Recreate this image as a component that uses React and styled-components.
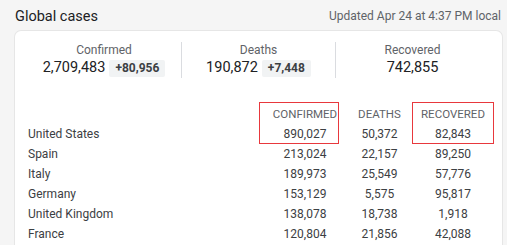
import React from "react";
import styled, { createGlobalStyle } from "styled-components";

const Global = createGlobalStyle`
  html, body { margin: 0; padding: 0; background: #f5f5f5; }
  body { font-family: Roboto, "Liberation Sans", Arial, sans-serif; color: #202124; }
`;

const Page = styled.div`
  width: 507px;
  height: 245px;
  overflow: hidden;
  box-sizing: border-box;
  padding: 5px 5px 0 15px;
`;

const Header = styled.div`
  display: flex;
  align-items: center;
  justify-content: space-between;
  height: 22px;
  margin-bottom: 4px;
`;

const Title = styled.h2`
  margin: 0;
  font-size: 14.5px;
  font-weight: 400;
  color: #202124;
`;

const Updated = styled.span`
  font-size: 12px;
  color: #5f6368;
  margin-right: 1px;
`;

const Card = styled.div`
  background: #fff;
  border-radius: 6px;
  box-shadow: 0 0 0 1px #e6e6e6, 0 1px 2px rgba(0,0,0,0.06);
  height: 240px;
`;

const Stats = styled.div`
  display: grid;
  grid-template-columns: repeat(3, 1fr);
  padding: 11px 13px 0 12px;
`;

const Stat = styled.div`
  display: flex;
  flex-direction: column;
  align-items: center;
  border-left: ${p => (p.$first ? "none" : "1px solid #dadce0")};
  height: 36px;
  justify-content: space-between;
`;

const StatLabel = styled.div`
  font-size: 12px;
  color: #5f6368;
  line-height: 16px;
`;

const StatValueRow = styled.div`
  display: flex;
  align-items: center;
  gap: 4px;
  line-height: 20px;
`;

const StatValue = styled.span`
  font-size: 14.5px;
  color: #202124;
`;

const Badge = styled.span`
  background: #f1f3f4;
  color: #3c4043;
  font-size: 12px;
  font-weight: 700;
  padding: 0 6px;
  border-radius: 2px;
  line-height: 17px;
`;

const TableWrap = styled.div`
  position: relative;
  margin: 0 10px 0 13px;
  padding-top: 26px;
`;

const Grid = styled.div`
  display: grid;
  grid-template-columns: 1fr 80px 69px 78px;
  grid-auto-rows: 20px;
  align-items: center;
  font-size: 12px;
  color: #3c4043;
`;

const Th = styled.div`
  text-align: center;
  color: #5f6368;
  font-size: 11.5px;
  text-transform: uppercase;
`;

const Name = styled.div`
  text-align: left;
`;

const Num = styled.div`
  text-align: center;
`;

const Highlight = styled.div`
  position: absolute;
  top: 24px;
  left: ${p => p.$left}px;
  width: ${p => p.$width}px;
  height: 42px;
  border: 1.5px solid #e8383d;
  box-sizing: border-box;
  pointer-events: none;
`;

const rows = [
  ["United States", "890,027", "50,372", "82,843"],
  ["Spain", "213,024", "22,157", "89,250"],
  ["Italy", "189,973", "25,549", "57,776"],
  ["Germany", "153,129", "5,575", "95,817"],
  ["United Kingdom", "138,078", "18,738", "1,918"],
  ["France", "120,804", "21,856", "42,088"],
];

export default function App() {
  return (
    <>
      <Global />
      <Page>
        <Header>
          <Title>Global cases</Title>
          <Updated>Updated Apr 24 at 4:37 PM local</Updated>
        </Header>
        <Card>
          <Stats>
            <Stat $first>
              <StatLabel>Confirmed</StatLabel>
              <StatValueRow>
                <StatValue>2,709,483</StatValue>
                <Badge>+80,956</Badge>
              </StatValueRow>
            </Stat>
            <Stat>
              <StatLabel>Deaths</StatLabel>
              <StatValueRow>
                <StatValue>190,872</StatValue>
                <Badge>+7,448</Badge>
              </StatValueRow>
            </Stat>
            <Stat>
              <StatLabel>Recovered</StatLabel>
              <StatValueRow>
                <StatValue>742,855</StatValue>
              </StatValueRow>
            </Stat>
          </Stats>
          <TableWrap>
            <Grid>
              <div />
              <Th>Confirmed</Th>
              <Th>Deaths</Th>
              <Th>Recovered</Th>
              {rows.map(r => (
                <React.Fragment key={r[0]}>
                  <Name>{r[0]}</Name>
                  <Num>{r[1]}</Num>
                  <Num>{r[2]}</Num>
                  <Num>{r[3]}</Num>
                </React.Fragment>
              ))}
            </Grid>
            <Highlight $left={231} $width={80} />
            <Highlight $left={384} $width={82} />
          </TableWrap>
        </Card>
      </Page>
    </>
  );
}
